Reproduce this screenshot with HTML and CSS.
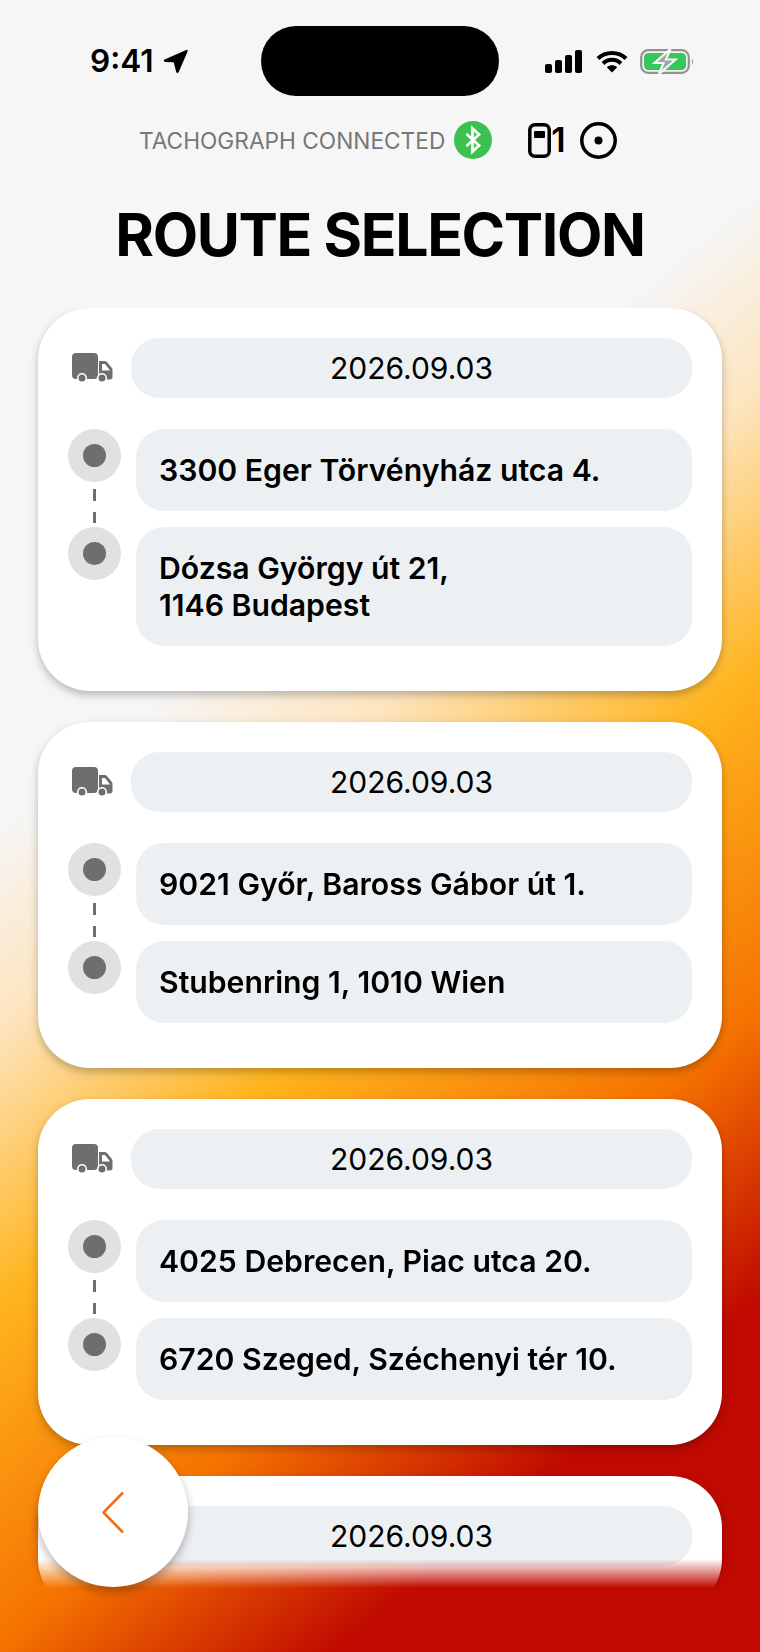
FILE: index.html
```html
<!DOCTYPE html>
<html lang="en">
<head>
  <meta charset="UTF-8">
  <title>Route Selection</title>
  <link rel="stylesheet" href="styles.css">
</head>
<body>
  <div class="screen">
    <!-- Status bar -->
    <div class="status-bar">
      <div class="status-left">
        <span class="clock">9:41</span>
        <svg class="loc-arrow" width="25" height="25" viewBox="0 0 25 25"><path d="M23.2 .9 1.6 10.6c-1.2.6-.9 2.2.5 2.3l8.6.4 2.5 9.8c.3 1.2 1.9 1.3 2.4.2L24.6 2.4c.4-1-.5-1.9-1.4-1.5z" fill="#000"/></svg>
      </div>
      <div class="island"></div>
      <div class="status-right">
        <svg width="37" height="23" viewBox="0 0 37 23"><rect x="0" y="14" width="7" height="9" rx="2"/><rect x="10" y="10" width="7" height="13" rx="2"/><rect x="20" y="5" width="7" height="18" rx="2"/><rect x="30" y="0" width="7" height="23" rx="2"/></svg>
        <svg width="32" height="23" viewBox="0 0 32 23"><path d="M2 8.5C9.5 1 22.500 1 30 8.500M7 13.500c5-5 13-5 18 0" fill="none" stroke="#000" stroke-width="4"/><path d="M16 22.500 10.800 17.200c2.900-2.600 7.500-2.600 10.400 0z"/></svg>
        <svg class="battery" width="54" height="25" viewBox="0 0 54 25">
          <rect x="1.200" y="1.200" width="47.600" height="22.600" rx="7" fill="none" stroke="#929292" stroke-width="2.200"/>
          <rect x="4" y="4" width="42" height="17" rx="4.500" fill="#34c759"/>
          <path d="M52 9.500c1.300.7 1.300 5.300 0 6z" fill="#929292"/>
          <path d="M30.500 0 14.500 14h9l-4.500 11 16.500-14.500h-9.500z" fill="#a3a3a3" stroke="#f6f6f7" stroke-width="2.200"/>
        </svg>
      </div>
    </div>

    <!-- Tachograph status -->
    <div class="tacho-row">
      <span class="tacho-label">TACHOGRAPH CONNECTED</span>
      <svg class="bt-icon" width="38" height="38" viewBox="0 0 38 38"><circle cx="19" cy="19" r="19" fill="#3cc150"/><path d="M12.500 13 25 24.500 18.500 30.500V7.500L25 13.500 12.500 25" fill="none" stroke="#fff" stroke-width="2.800"/></svg>
      <div class="driver-slot">
        <svg width="23" height="35" viewBox="0 0 23 35"><rect x="1.800" y="1.800" width="19.400" height="31.400" rx="5" fill="none" stroke="#000" stroke-width="3.500"/><rect x="6" y="8" width="11" height="7" rx="1"/></svg>
        <span class="slot-num">1</span>
        <svg class="slot-status" width="37" height="37" viewBox="0 0 37 37"><circle cx="18.500" cy="18.500" r="16.700" fill="none" stroke="#000" stroke-width="3.500"/><circle cx="18.500" cy="18.500" r="4"/></svg>
      </div>
    </div>

    <h1 class="title">ROUTE SELECTION</h1>

    <!-- Route list -->
    <div class="route-list">
      <div class="card">
        <div class="card-head">
          <svg class="truck" width="41" height="30" viewBox="0 0 41 30"><use href="#truck-shape"/></svg>
          <div class="date-pill">2026.09.03</div>
        </div>
        <div class="route">
          <div class="route-line">
            <span class="dot"></span>
            <svg class="dashes" width="3" height="45" viewBox="0 0 3 45"><path d="M1.500 7v12M1.500 30v11" stroke="#6e6e6e" stroke-width="3"/></svg>
            <span class="dot"></span>
          </div>
          <div class="stops">
            <div class="stop">3300 Eger Törvényház utca 4.</div>
            <div class="stop">Dózsa György út 21,<br>1146 Budapest</div>
          </div>
        </div>
      </div>

      <div class="card">
        <div class="card-head">
          <svg class="truck" width="41" height="30" viewBox="0 0 41 30"><use href="#truck-shape"/></svg>
          <div class="date-pill">2026.09.03</div>
        </div>
        <div class="route">
          <div class="route-line">
            <span class="dot"></span>
            <svg class="dashes" width="3" height="45" viewBox="0 0 3 45"><path d="M1.500 7v12M1.500 30v11" stroke="#6e6e6e" stroke-width="3"/></svg>
            <span class="dot"></span>
          </div>
          <div class="stops">
            <div class="stop">9021 Győr, Baross Gábor út 1.</div>
            <div class="stop">Stubenring 1, 1010 Wien</div>
          </div>
        </div>
      </div>

      <div class="card">
        <div class="card-head">
          <svg class="truck" width="41" height="30" viewBox="0 0 41 30"><use href="#truck-shape"/></svg>
          <div class="date-pill">2026.09.03</div>
        </div>
        <div class="route">
          <div class="route-line">
            <span class="dot"></span>
            <svg class="dashes" width="3" height="45" viewBox="0 0 3 45"><path d="M1.500 7v12M1.500 30v11" stroke="#6e6e6e" stroke-width="3"/></svg>
            <span class="dot"></span>
          </div>
          <div class="stops">
            <div class="stop">4025 Debrecen, Piac utca 20.</div>
            <div class="stop">6720 Szeged, Széchenyi tér 10.</div>
          </div>
        </div>
      </div>

      <div class="card">
        <div class="card-head">
          <svg class="truck" width="41" height="30" viewBox="0 0 41 30"><use href="#truck-shape"/></svg>
          <div class="date-pill">2026.09.03</div>
        </div>
      </div>
    </div>

    <!-- Floating back button -->
    <button class="back-btn">
      <svg width="24" height="43" viewBox="0 0 24 43"><path d="M22 1.500 2.500 21.500 22 41.500" fill="none" stroke="#f0701a" stroke-width="2.600" stroke-linejoin="round"/></svg>
    </button>
  </div>

  <svg width="0" height="0" class="defs">
    <defs>
      <g id="truck-shape">
        <rect x="0" y="0" width="26" height="26" rx="4" fill="#6e6e6e"/>
        <path d="M27 8h5.500c1 0 1.800.4 2.400 1.100l5 6c.4.500.6 1.100.6 1.800V24c0 1.400-1 2.500-2.500 2.500H27z" fill="#6e6e6e"/>
        <path d="M30 11h3l5 6.500h-8z" fill="#fff"/>
        <circle cx="10" cy="25" r="4.300" fill="#6e6e6e" stroke="#fff" stroke-width="1.600"/>
        <circle cx="30" cy="25" r="4.300" fill="#6e6e6e" stroke="#fff" stroke-width="1.600"/>
      </g>
    </defs>
  </svg>
</body>
</html>
```

FILE: styles.css
```css
/* Base reset */
* { margin: 0; padding: 0; box-sizing: border-box; }
body { font-family: Inter, "Liberation Sans", sans-serif; color: #000; overflow: hidden; }
.defs { position: absolute; }

.screen {
  position: relative; width: 760px; height: 1652px; overflow: hidden;
  background: linear-gradient(140deg, #f6f6f7 0%, #f6f6f7 36%, #fde4bd 45%, #ffb41e 57%, #f57200 72%, #c00a00 84.5%, #c00a00 100%);
}

/* Status bar */
.status-bar {
  display: flex; align-items: center;
  height: 70px; margin-top: 26px; padding-left: 90px;
}
.status-left { display: flex; align-items: center; gap: 9px; width: 171px; }
.clock { font-size: 31.5px; font-weight: 600; line-height: 1; }
.island { width: 238px; height: 70px; border-radius: 35px; background: #000; }
.status-right { display: flex; align-items: center; gap: 14px; margin-left: 46px; }
.battery { margin-left: -2px; }

/* Tachograph row */
.tacho-row {
  display: flex; align-items: center; height: 38px; margin-top: 25px; padding-left: 139px;
}
.tacho-label { font-size: 22.7px; color: #777; white-space: nowrap; }
.bt-icon { margin-left: 9px; }
.driver-slot { display: flex; align-items: center; margin-left: 36px; }
.slot-num { font-size: 34px; font-weight: 600; line-height: 1; width: 18px; }
.slot-status { margin-left: 11px; }

.title {
  font-size: 59px; font-weight: 700; line-height: 70px; text-align: center;
  margin-top: 41px; letter-spacing: -1.4px;
}

/* Route list, fades out above the bottom edge */
.route-list {
  display: flex; flex-direction: column; gap: 31px;
  height: 1280px; margin-top: 38px; padding: 0 38px; overflow: hidden;
  -webkit-mask-image: linear-gradient(to bottom, #000 1251px, transparent 1280px);
  mask-image: linear-gradient(to bottom, #000 1251px, transparent 1280px);
}
.card {
  flex-shrink: 0; padding: 30px 30px 45px; background: #fff; border-radius: 52px;
  box-shadow: 0 4px 8px rgba(0,0,0,0.25);
}
.card-head { display: flex; align-items: center; }
.truck { margin: 0 18px 0 4px; flex-shrink: 0; }
.date-pill {
  flex-grow: 1; height: 60px; line-height: 60px; text-align: center;
  background: #edf0f3; border-radius: 28px; font-size: 30px;
}

.route { display: flex; margin-top: 31px; }
.route-line { display: flex; flex-direction: column; align-items: center; width: 53px; margin-right: 15px; flex-shrink: 0; }
.dot {
  display: flex; align-items: center; justify-content: center;
  width: 53px; height: 53px; border-radius: 50%; background: #e1e1e1;
}
.dot::after { content: ""; width: 23px; height: 23px; border-radius: 50%; background: #6e6e6e; }
.stops { flex-grow: 1; display: flex; flex-direction: column; gap: 16px; }
.stop {
  padding: 22.5px 23px; background: #edf0f3; border-radius: 28px;
  font-size: 30.2px; font-weight: 600; line-height: 37px;
}

/* Back button */
.back-btn {
  position: absolute; left: 38px; bottom: 65px; width: 150px; height: 150px;
  display: flex; align-items: center; justify-content: center;
  background: #fff; border: none; border-radius: 50%;
  box-shadow: 0 5px 10px rgba(0,0,0,0.28);
}
```
